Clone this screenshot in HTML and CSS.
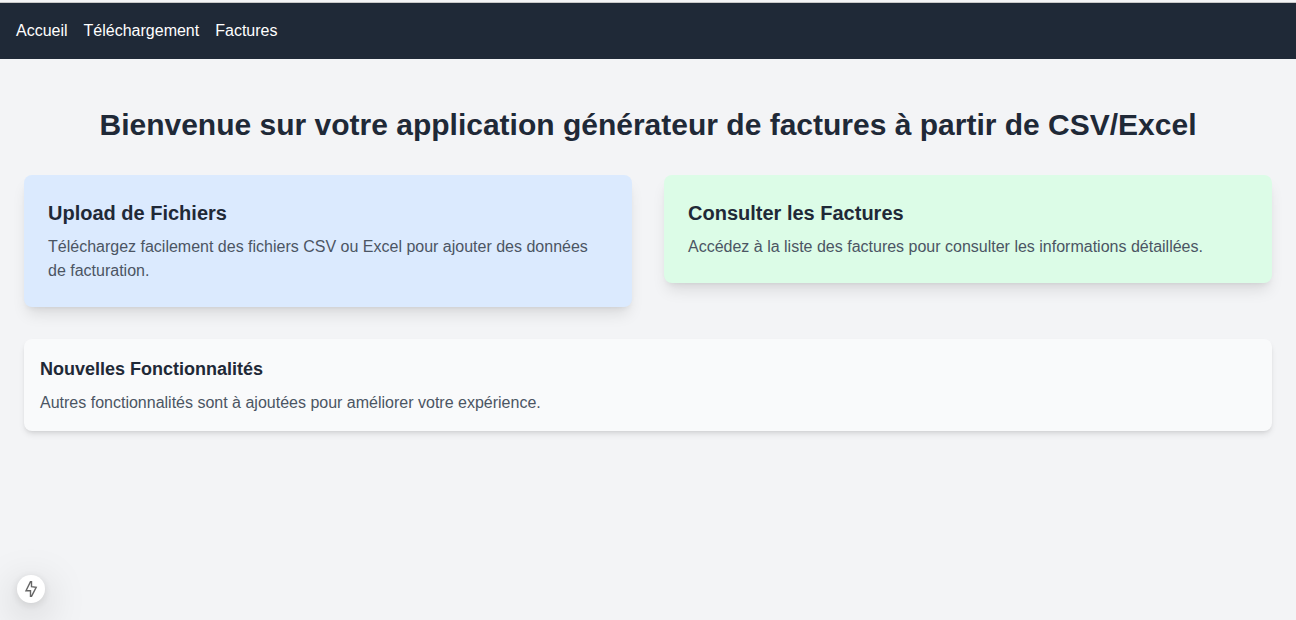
FILE: index.html
```html
<!DOCTYPE html>
<html lang="fr">
<head>
  <meta charset="utf-8">
  <meta name="viewport" content="width=device-width, initial-scale=1">
  <title>Générateur de factures</title>
  <link rel="stylesheet" href="styles.css">
</head>
<body>
  <header class="topbar">
    <nav>
      <ul class="nav-list">
        <li><a class="nav-link" href="#accueil">Accueil</a></li>
        <li><a class="nav-link" href="#telechargement">Téléchargement</a></li>
        <li><a class="nav-link" href="#factures">Factures</a></li>
      </ul>
    </nav>
  </header>
  <main class="content">
    <h1 class="page-title">Bienvenue sur votre application générateur de factures à partir de CSV/Excel</h1>
    <div class="cards">
      <section class="card card-upload">
        <h2 class="card-title">Upload de Fichiers</h2>
        <p class="text">Téléchargez facilement des fichiers CSV ou Excel pour ajouter des données de facturation.</p>
      </section>
      <section class="card card-invoices">
        <h2 class="card-title">Consulter les Factures</h2>
        <p class="text">Accédez à la liste des factures pour consulter les informations détaillées.</p>
      </section>
    </div>
    <section class="news">
      <h3 class="news-title">Nouvelles Fonctionnalités</h3>
      <p class="text">Autres fonctionnalités sont à ajoutées pour améliorer votre expérience.</p>
    </section>
  </main>
  <button class="indicator" type="button" aria-label="Indicateur de page statique">
    <svg class="indicator-icon" viewBox="0 0 16 16" aria-hidden="true">
      <path d="M8.3 .6H7.5L3 9.7H7.5V15.4H8.5L13.2 6.3 8.5 5.6V.6Z" fill="none" stroke="#666" stroke-width="1.4" stroke-linejoin="miter"/>
    </svg>
  </button>
</body>
</html>
```
FILE: styles.css
```css
* {
  box-sizing: border-box;
  margin: 0;
  padding: 0;
}

body {
  min-height: 100vh;
  padding-top: 2px;
  background: #f3f4f6;
  color: #1f2937;
  font: 16px/24px "Liberation Sans", Arial, sans-serif;
}

.topbar {
  padding: 16px;
  border-top: 1px solid #c8c8c8;
  background: #1f2937;
}

.nav-list {
  display: flex;
  gap: 16px;
  list-style: none;
}

.nav-link {
  color: #fff;
  text-decoration: none;
}

.content {
  display: flex;
  flex-direction: column;
  gap: 32px;
  padding: 48px 24px;
}

.page-title {
  font-size: 30px;
  line-height: 36px;
  text-align: center;
}

.cards {
  display: grid;
  grid-template-columns: repeat(2, minmax(0, 1fr));
  align-items: start;
  gap: 32px;
}

.card {
  padding: 24px;
  border-radius: 8px;
  box-shadow: 0 10px 15px -3px rgb(0 0 0 / 10%), 0 4px 6px -4px rgb(0 0 0 / 10%);
}

.card-upload {
  background: #dbeafe;
}

.card-invoices {
  background: #dcfce7;
}

.card-title {
  margin-bottom: 8px;
  font-size: 20px;
  line-height: 28px;
}

.text {
  color: #4b5563;
}

.news {
  padding: 16px;
  border-radius: 8px;
  background: #f9fafb;
  box-shadow: 0 4px 6px -1px rgb(0 0 0 / 10%), 0 2px 4px -2px rgb(0 0 0 / 10%);
}

.news-title {
  margin-bottom: 8px;
  font-size: 18px;
  line-height: 28px;
}

.indicator {
  position: fixed;
  bottom: 17px;
  left: 17px;
  display: grid;
  place-items: center;
  width: 28px;
  height: 28px;
  border: 0;
  border-radius: 50%;
  background: #fff;
  box-shadow: 0 11px 40px 0 rgb(0 0 0 / 25%), 0 2px 10px 0 rgb(0 0 0 / 12%);
}

.indicator-icon {
  width: 16px;
  height: 16px;
}
```
